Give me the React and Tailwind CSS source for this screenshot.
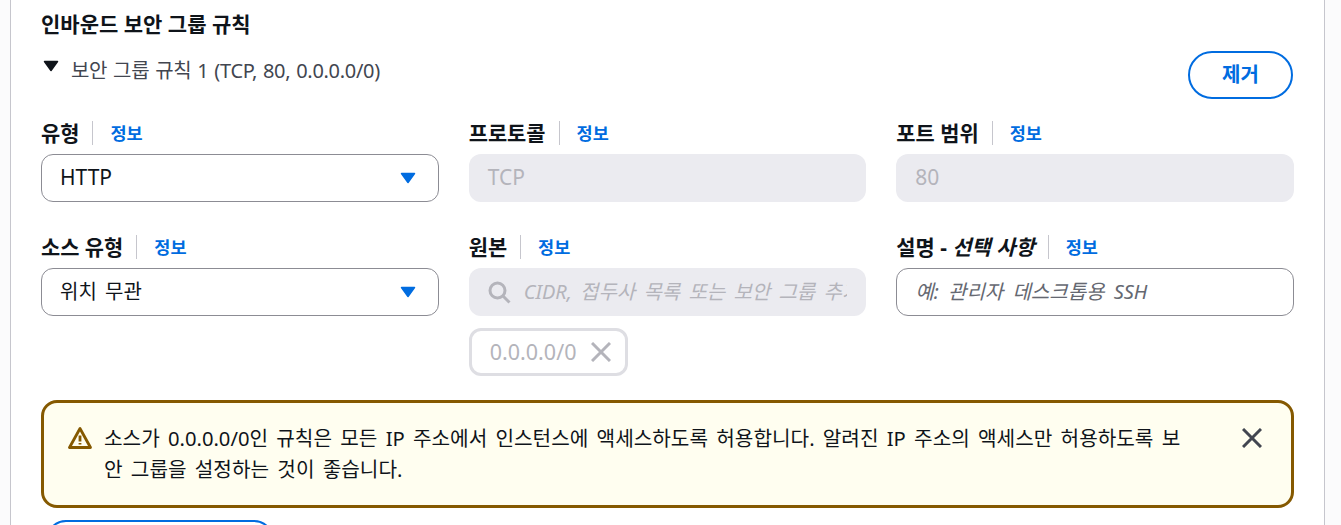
import React from 'react';

const FONT = 'font-["Noto_Sans","Noto_Sans_CJK_KR",sans-serif]';

const Caret = ({ className }) => (
  <svg viewBox="0 0 16 12" className={className} fill="currentColor">
    <path d="M1.5 1.5h13L8 10.5z" stroke="currentColor" strokeWidth="1.5" strokeLinejoin="round" />
  </svg>
);

const FieldLabel = ({ children }) => (
  <div className="flex items-center h-[24px] mb-[9px]">
    <span className="text-[20.9px] leading-[24px] font-bold text-[#0f141a] whitespace-nowrap">{children}</span>
    <span className="w-px h-[24px] bg-[#c6c6cd] ml-[13px] mr-[17px]" />
    <a className="text-[17.5px] leading-[24px] font-bold text-[#006ce0]">정보</a>
  </div>
);

const SelectBox = ({ children, className }) => (
  <div className="h-[48px] border border-[#8c8c94] rounded-[12px] bg-white flex items-center justify-between pl-[18px] pr-[22px]">
    <span className={`${className} text-[#0f141a]`}>{children}</span>
    <Caret className="w-[16px] h-[12px] text-[#006ce0]" />
  </div>
);

const DisabledBox = ({ value }) => (
  <div className="h-[48px] rounded-[12px] bg-[#ebebf0] flex items-center pl-[19px] text-[21px] text-[#b4b4bb]">{value}</div>
);

export default function App() {
  return (
    <div className={`${FONT} h-[525px] overflow-hidden bg-[#fbfbfc] pl-[10px] pr-[16px]`}>
      <div className="h-full bg-white border-x border-[#c6c6cd] pl-[30px] pr-[30px] overflow-hidden">
        <h3 className="pt-[11px] text-[21px] leading-[26px] font-bold text-[#0f141a]">인바운드 보안 그룹 규칙</h3>

        <div className="flex items-start justify-between h-[74px] mt-[14px]">
          <div className="flex items-start">
            <Caret className="w-[16px] h-[12px] mt-[9px] ml-[2px] mr-[12px] text-[#0f141a]" />
            <span className="text-[20px] leading-[30px] mt-[5px] tracking-[-0.3px] [word-spacing:1px] text-[#424650]">보안 그룹 규칙 1 (TCP, 80, 0.0.0.0/0)</span>
          </div>
          <button className="w-[105px] h-[48px] mr-[1px] border-2 border-[#006ce0] rounded-full text-[20px] font-bold text-[#006ce0] bg-white">제거</button>
        </div>

        <div className="grid grid-cols-3 gap-x-[30px] -mt-[4px]">
          <div>
            <FieldLabel>유형</FieldLabel>
            <SelectBox className="text-[21px]">HTTP</SelectBox>
          </div>
          <div>
            <FieldLabel>프로토콜</FieldLabel>
            <DisabledBox value="TCP" />
          </div>
          <div>
            <FieldLabel>포트 범위</FieldLabel>
            <DisabledBox value="80" />
          </div>
        </div>

        <div className="grid grid-cols-3 gap-x-[30px] mt-[33px]">
          <div>
            <FieldLabel>소스 유형</FieldLabel>
            <SelectBox className="text-[20px] [word-spacing:3px]">위치 무관</SelectBox>
          </div>
          <div>
            <FieldLabel>원본</FieldLabel>
            <div className="h-[48px] rounded-[12px] bg-[#ebebf0] flex items-center pl-[18px] pr-[19px]">
              <svg viewBox="0 0 24 24" className="w-[24px] h-[24px] shrink-0 mr-[13px] text-[#b4b4bb]" fill="none" stroke="currentColor" strokeWidth="3">
                <circle cx="10.5" cy="10.5" r="7.5" />
                <path d="M16 16l6.5 6.5" />
              </svg>
              <span className="text-[20px] [word-spacing:3px] italic text-[#b4b4bb] whitespace-nowrap overflow-hidden">CIDR, 접두사 목록 또는 보안 그룹 추가</span>
            </div>
            <div className="mt-[12px] w-[159px] h-[48px] border-[3px] border-[#dedee3] rounded-[12px] flex items-center pl-[18px]">
              <span className="text-[21.5px] text-[#b4b4bb]">0.0.0.0/0</span>
              <svg viewBox="0 0 20 20" className="w-[20px] h-[20px] ml-[15px] text-[#b4b4bb]" fill="none" stroke="currentColor" strokeWidth="3">
                <path d="M1 1l18 18M19 1L1 19" />
              </svg>
            </div>
          </div>
          <div>
            <FieldLabel>
              설명 - <span className="italic">선택 사항</span>
            </FieldLabel>
            <div className="h-[48px] border border-[#8c8c94] rounded-[12px] bg-white flex items-center pl-[18px] text-[20px] [word-spacing:4px] italic text-[#656871]">예: 관리자 데스크톱용 SSH</div>
          </div>
        </div>

        <div className="mt-[24px] h-[108px] border-[3px] border-[#855900] rounded-[16px] bg-[#fffef0] flex items-start pl-[24px] pr-[29px] pt-[20px]">
          <svg viewBox="0 0 24 24" className="w-[24px] h-[24px] shrink-0 mt-[3px] mr-[12px] text-[#855900]" fill="none" stroke="currentColor" strokeWidth="2.8" strokeLinejoin="round">
            <path d="M12 2.5L1.5 21.5h21z" />
            <path d="M12 9.5v6M12 17v1.5" />
          </svg>
          <p className="w-[1085px] text-[20.2px] leading-[31px] [word-spacing:3px] break-all text-[#0f141a]">소스가 0.0.0.0/0인 규칙은 모든 IP 주소에서 인스턴스에 액세스하도록 허용합니다. 알려진 IP 주소의 액세스만 허용하도록 보안 그룹을 설정하는 것이 좋습니다.</p>
          <svg viewBox="0 0 20 20" className="w-[20px] h-[20px] shrink-0 ml-auto mt-[5px] text-[#424650]" fill="none" stroke="currentColor" strokeWidth="3">
            <path d="M1 1l18 18M19 1L1 19" />
          </svg>
        </div>

        <div className="mt-[12px] ml-[5px] w-[228px] h-[40px] border-2 border-[#006ce0] rounded-full bg-white" />
      </div>
    </div>
  );
}
